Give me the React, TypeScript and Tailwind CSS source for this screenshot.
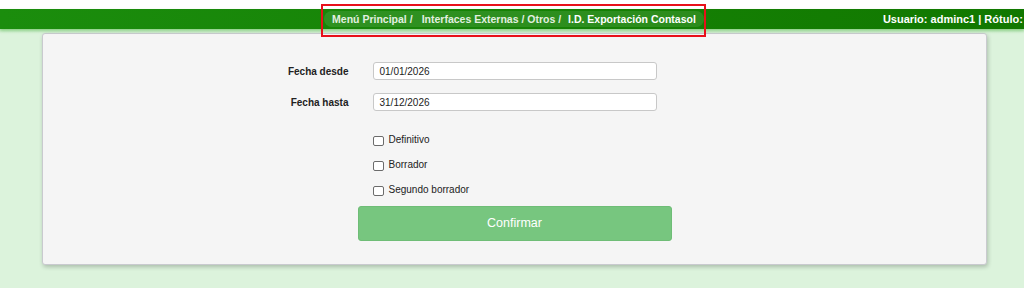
import React from "react";

const font = { fontFamily: '"Liberation Sans", Arial, Helvetica, sans-serif' };

function Check({ label }: { label: string }) {
  return (
    <div className="flex items-start h-[25px] ml-[15px]">
      <span className="mt-[2px] w-[11px] h-[10px] border border-[#6b6b6b] rounded-[2px] bg-white shrink-0" />
      <span className="ml-[5px] text-[10px] leading-[11px] text-[#222]">{label}</span>
    </div>
  );
}

export default function App() {
  return (
    <div className="w-[1024px] h-[288px] bg-[#dcf3dc] overflow-hidden" style={font}>
      <div className="h-[9px] bg-white" />
      <div className="relative grid grid-cols-[1fr_auto_1fr] items-center h-[20px] pl-[4px] bg-gradient-to-r from-[#1b8d0d] to-[#117800] overflow-visible z-10 shadow-[0_2px_3px_rgba(80,180,70,0.45)]">
        <div />
        <div className="relative">
          <div className="flex items-center h-[16px] px-[8px] rounded-full bg-white/10 text-[10.5px] font-bold whitespace-nowrap leading-none">
            <span className="text-[#e3f0e0]">Menú Principal /</span>
            <span className="ml-[9px] text-[#e3f0e0]">Interfaces Externas / Otros /</span>
            <span className="ml-[7px] text-white">I.D. Exportación Contasol</span>
          </div>
          <div className="absolute left-[-3px] right-[-2px] top-[-7px] bottom-[-10px] border-2 border-[#e8101a]" />
        </div>
        <div className="pl-[179px] whitespace-nowrap overflow-hidden text-white font-bold text-[11px] leading-none">
          Usuario: adminc1 | Rótulo: CONTASOL
        </div>
      </div>
      <div className="h-[4px] bg-gradient-to-b from-[#c2e8bf] to-[#dcf3dc]" />
      <div className="ml-[42px] w-[945px] h-[232px] bg-[#f5f5f5] border border-[#c9cacf] rounded-[3px] shadow-[1px_2px_4px_rgba(0,0,0,0.22)] pt-[28px]">
        <div className="w-[314px] mx-auto">
          <div className="flex justify-end items-center pr-[15px] h-[18px]">
            <label className="text-[10px] font-bold text-[#222] whitespace-nowrap mr-[24px]">Fecha desde</label>
            <div className="w-[284px] h-[18px] shrink-0 bg-white border border-[#c8c8c8] rounded-[3px] px-[6px] flex items-center text-[10px] text-[#222]">01/01/2026</div>
          </div>
          <div className="flex justify-end items-center pr-[15px] h-[18px] mt-[13px]">
            <label className="text-[10px] font-bold text-[#222] whitespace-nowrap mr-[24px]">Fecha hasta</label>
            <div className="w-[284px] h-[18px] shrink-0 bg-white border border-[#c8c8c8] rounded-[3px] px-[6px] flex items-center text-[10px] text-[#222]">31/12/2026</div>
          </div>
          <div className="mt-[23px]">
            <Check label="Definitivo" />
            <Check label="Borrador" />
            <Check label="Segundo borrador" />
          </div>
          <button className="mt-[-3px] w-[314px] h-[35px] bg-[#77c67f] rounded-[3px] border border-[#6fbd77] text-white text-[12.5px]">
            Confirmar
          </button>
        </div>
      </div>
    </div>
  );
}
